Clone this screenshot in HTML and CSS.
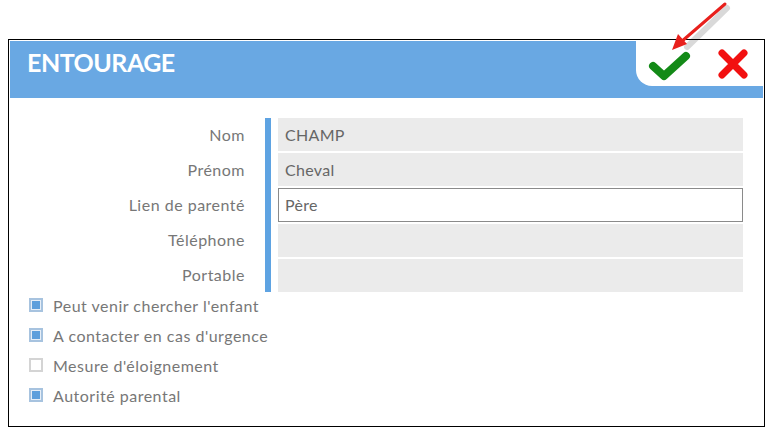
FILE: index.html
```html
<!DOCTYPE html>
<html lang="fr">
<head>
    <meta charset="UTF-8">
    <title>Entourage</title>
    <link rel="stylesheet" href="styles.css">
</head>
<body>
    <div class="frame">
        <div class="header">
            <h2>ENTOURAGE</h2>
            <div class="actions">
                <svg class="icon" width="44" height="34" viewBox="0 0 44 34">
                    <polyline points="5,19 16,29 38,9" fill="none" stroke="#138a17" stroke-width="8" stroke-linecap="round" stroke-linejoin="round"/>
                </svg>
                <svg class="icon" width="34" height="34" viewBox="0 0 34 34">
                    <path d="M6,6 L28,28 M28,6 L6,28" fill="none" stroke="#f21010" stroke-width="7" stroke-linecap="round"/>
                </svg>
            </div>
        </div>

        <div class="form">
            <div class="labels">
                <div class="label">Nom</div>
                <div class="label">Prénom</div>
                <div class="label">Lien de parenté</div>
                <div class="label">Téléphone</div>
                <div class="label">Portable</div>
            </div>
            <div class="bar"></div>
            <div class="fields">
                <div class="field">CHAMP</div>
                <div class="field">Cheval</div>
                <div class="field active">Père</div>
                <div class="field"></div>
                <div class="field"></div>
            </div>
        </div>

        <div class="checks">
            <div class="check"><span class="box on"></span>Peut venir chercher l'enfant</div>
            <div class="check"><span class="box on"></span>A contacter en cas d'urgence</div>
            <div class="check"><span class="box"></span>Mesure d'éloignement</div>
            <div class="check"><span class="box on"></span>Autorité parental</div>
        </div>
    </div>

    <svg class="arrow" width="70" height="60" viewBox="0 0 70 60">
        <line x1="62" y1="7" x2="22" y2="46" stroke="rgba(0,0,0,0.15)" stroke-width="6" stroke-linecap="round"/>
        <line x1="60" y1="3" x2="16" y2="41" stroke="#e8201c" stroke-width="3" stroke-linecap="round"/>
        <polygon points="7,49 13,33 22,43" fill="#e8201c"/>
    </svg>
</body>
</html>
```

FILE: styles.css
```css
body {
    margin: 0;
    padding: 0;
    background-color: white;
    font-family: Lato, "Noto Sans", sans-serif;
}
.frame {
    margin: 39px 0 0 8px;
    width: 753px;
    height: 384px;
    border: 1px solid #000;
    padding: 1px;
    box-sizing: content-box;
}
.header {
    display: flex;
    justify-content: space-between;
    height: 57px;
    background-color: #69a8e3;
}
.header h2 {
    margin: 0;
    padding: 6px 0 0 17px;
    color: white;
    font-size: 25px;
    font-weight: 700;
    letter-spacing: -0.5px;
}
.actions {
    display: flex;
    align-items: center;
    gap: 24px;
    width: 127px;
    height: 45px;
    padding: 0 0 0 12px;
    box-sizing: border-box;
    background-color: white;
    border-bottom-left-radius: 16px;
}
.icon {
    display: block;
}
.form {
    display: flex;
    margin-top: 20px;
}
.labels {
    width: 235px;
    display: flex;
    flex-direction: column;
    gap: 2px;
}
.label {
    height: 33px;
    line-height: 33px;
    text-align: right;
    color: #777;
    font-size: 16px;
    letter-spacing: 0.5px;
}
.bar {
    width: 6px;
    margin-left: 20px;
    background-color: #5ea3e2;
}
.fields {
    width: 465px;
    margin-left: 7px;
    display: flex;
    flex-direction: column;
    gap: 2px;
}
.field {
    height: 33px;
    line-height: 33px;
    padding-left: 7px;
    background-color: #ebebeb;
    color: #666;
    font-size: 16px;
    letter-spacing: 0.3px;
}
.field.active {
    background-color: white;
    border: 1px solid #8a8a8a;
    height: 32px;
    line-height: 32px;
    padding-left: 6px;
}
.checks {
    margin-top: -2px;
    padding-left: 19px;
}
.check {
    display: flex;
    align-items: center;
    height: 30px;
    color: #777;
    font-size: 16px;
    letter-spacing: 0.5px;
}
.box {
    width: 14px;
    height: 14px;
    box-sizing: border-box;
    border: 2px solid #d4d4d4;
    margin-right: 10px;
    background-color: white;
}
.box.on {
    border-color: #a7c3df;
    background-color: #5e9fdc;
    box-shadow: inset 0 0 0 1px #e6eef7;
}
.arrow {
    position: absolute;
    left: 665px;
    top: 1px;
}
```
